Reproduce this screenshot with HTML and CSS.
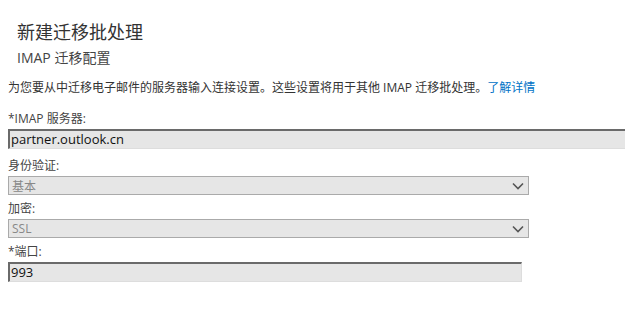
FILE: index.html
```html
<!DOCTYPE html>
<html>
<head>
  <title>新建迁移批处理</title>
  <link rel="stylesheet" href="styles.css">
</head>
<body>
  <div class="header">
    <h1>新建迁移批处理</h1>
    <h2>IMAP 迁移配置</h2>
  </div>

  <div class="content">
    <p class="intro">为您要从中迁移电子邮件的服务器输入连接设置。这些设置将用于其他 IMAP 迁移批处理。<a href="#">了解详情</a></p>

    <label class="field-label">*IMAP 服务器:</label>
    <div class="text-input wide">partner.outlook.cn</div>

    <label class="field-label">身份验证:</label>
    <div class="select-box">
      <span>基本</span>
      <svg class="chevron" width="12" height="8" viewBox="0 0 12 8"><path d="M1 1.5 L6 6.5 L11 1.5" fill="none" stroke="#555" stroke-width="1.6"/></svg>
    </div>

    <label class="field-label">加密:</label>
    <div class="select-box">
      <span>SSL</span>
      <svg class="chevron" width="12" height="8" viewBox="0 0 12 8"><path d="M1 1.5 L6 6.5 L11 1.5" fill="none" stroke="#555" stroke-width="1.6"/></svg>
    </div>

    <label class="field-label">*端口:</label>
    <div class="text-input port">993</div>
  </div>
</body>
</html>
```

FILE: styles.css
```css
/* Global styles */
body {
  font-family: "Open Sans", "Noto Sans CJK SC", sans-serif;
  margin: 0;
  padding: 0;
  color: #333;
  background-color: #fff;
}

/* Header */
.header {
  padding: 20px 17px 0;
}

.header h1 {
  font-size: 18px;
  font-weight: normal;
  color: #333;
  margin: 0;
  line-height: 24px;
}

.header h2 {
  font-size: 14px;
  font-weight: normal;
  color: #444;
  margin: 4px 0 0;
  line-height: 20px;
}

/* Form */
.content {
  padding: 12px 8px 0;
}

.intro {
  font-size: 12px;
  color: #333;
  margin: 0 0 16px;
  line-height: 16px;
}

.intro a {
  color: #0072c6;
  text-decoration: none;
}

.field-label {
  display: block;
  font-size: 12px;
  color: #444;
  line-height: 14px;
  margin-bottom: 3px;
}

.text-input {
  box-sizing: border-box;
  height: 20px;
  background-color: #e6e6e6;
  border-top: 2px solid #6a6a6a;
  border-left: 2px solid #6a6a6a;
  border-bottom: 1px solid #ddd;
  border-right: 1px solid #ddd;
  font-size: 13px;
  color: #111;
  line-height: 17px;
  padding-left: 1px;
  margin-bottom: 10px;
}

.text-input.wide {
  margin-right: -20px;
}

.text-input.port {
  width: 514px;
}

.select-box {
  box-sizing: border-box;
  width: 521px;
  height: 19px;
  background-color: #e6e6e6;
  border: 1px solid #aaa;
  display: flex;
  align-items: center;
  justify-content: space-between;
  padding: 0 4px 0 3px;
  font-size: 12px;
  color: #888;
  margin-bottom: 7px;
}

.chevron {
  display: block;
}
```
